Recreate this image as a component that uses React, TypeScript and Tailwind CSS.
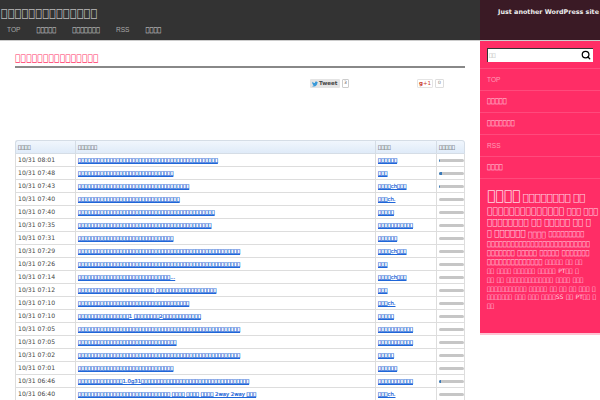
import { Search } from "lucide-react";
import { FaTwitter } from "react-icons/fa";

// the reference only shows missing-glyph boxes, so the copy is kept as boxes
const box = (n: number) => "\uE000".repeat(n);

const navItems = ["TOP", box(5), box(7), "RSS", box(4)];
const latinNav = ["TOP", "RSS"];

const rows: { time: string; title: string; source: string; bar?: number }[] = [
  { time: "10/31 08:01", title: box(44), source: box(6), bar: 1 },
  { time: "10/31 07:48", title: box(30), source: box(3), bar: 3 },
  { time: "10/31 07:43", title: box(35), source: `${box(4)}ch${box(3)}`, bar: 1 },
  { time: "10/31 07:40", title: box(32), source: `${box(3)}ch.` },
  { time: "10/31 07:40", title: box(43), source: box(5) },
  { time: "10/31 07:35", title: box(42), source: box(11) },
  { time: "10/31 07:31", title: box(30), source: box(6) },
  { time: "10/31 07:29", title: box(51), source: `${box(4)}ch${box(3)}` },
  { time: "10/31 07:26", title: box(51), source: box(3) },
  { time: "10/31 07:14", title: `${box(29)}...`, source: `${box(4)}ch${box(3)}` },
  { time: "10/31 07:12", title: `${box(24)} ${box(19)}`, source: box(3) },
  { time: "10/31 07:10", title: box(35), source: `${box(3)}ch.` },
  { time: "10/31 07:10", title: `${box(16)}1 ${box(8)}2${box(12)}`, source: box(5) },
  { time: "10/31 07:05", title: box(51), source: box(11) },
  { time: "10/31 07:05", title: box(31), source: box(11) },
  { time: "10/31 07:02", title: box(51), source: box(5) },
  { time: "10/31 07:01", title: box(30), source: box(6) },
  { time: "10/31 06:46", title: `${box(14)}1.0g31${box(34)}`, source: box(11), bar: 2 },
  { time: "10/31 06:40", title: `${box(29)} ${box(4)} ${box(4)} ${box(4)} 2way 2way ${box(3)}`, source: `${box(3)}ch.` },
];

// tag cloud, one entry per rendered line
const cloud: { height: string; words: [string, string][] }[] = [
  { height: "h-[16px]", words: [[box(4), "text-[13.9px]"], [box(8), "text-[10px]"], [box(2), "text-[10px]"]] },
  { height: "h-[12.5px]", words: [[box(14), "text-[9.2px]"], [box(3), "text-[8px]"], [box(3), "text-[8px]"]] },
  { height: "h-[11.5px]", words: [[box(8), "text-[8.7px]"], [box(2), "text-[8.7px]"], [box(5), "text-[8.7px]"], [box(2), "text-[8.7px]"], [box(1), "text-[8.7px]"]] },
  { height: "h-[11px]", words: [[box(1), "text-[8px]"], [box(6), "text-[8.7px]"], [box(4), "text-[7.5px]"], [box(9), "text-[6.6px]"]] },
  { height: "h-[9.5px]", words: [[box(26), "text-[6.6px]"]] },
  { height: "h-[9px]", words: [[box(7), "text-[6.6px]"], [box(5), "text-[6.6px]"], [box(5), "text-[6.6px]"], [box(7), "text-[6.6px]"]] },
  { height: "h-[8.8px]", words: [[box(14), "text-[6.6px]"], [box(5), "text-[6px]"], [box(2), "text-[6px]"], [box(2), "text-[6px]"]] },
  { height: "h-[8.8px]", words: [[box(2), "text-[6px]"], [box(4), "text-[6px]"], [box(6), "text-[6px]"], [box(5), "text-[6px]"], [`PT${box(2)}`, "text-[6px]"], [box(1), "text-[6px]"]] },
  { height: "h-[8.8px]", words: [[box(2), "text-[6px]"], [box(2), "text-[6px]"], [box(13), "text-[6px]"], [box(4), "text-[6px]"], [box(3), "text-[6px]"]] },
  { height: "h-[8.8px]", words: [[box(11), "text-[6px]"], [box(5), "text-[6px]"], [box(2), "text-[6px]"], [box(2), "text-[6px]"], [box(2), "text-[6px]"], [box(3), "text-[6px]"], [box(1), "text-[6px]"]] },
  { height: "h-[8.8px]", words: [[box(7), "text-[6px]"], [box(3), "text-[6px]"], [box(3), "text-[6px]"], [`${box(4)}SS`, "text-[6px]"], [box(2), "text-[6px]"], [`PT${box(2)}`, "text-[6px]"], [box(1), "text-[6px]"]] },
  { height: "h-[8.8px]", words: [[box(2), "text-[6px]"]] },
];

function App() {
  return (
    <div className="flex h-[400px] w-[600px] flex-col overflow-hidden bg-white font-['DejaVu_Sans',sans-serif]">
      <div className="flex h-10 shrink-0">
        <div className="flex-1 bg-[#333]">
          <div className="pl-px pt-[6px] text-[11.5px] leading-[14px] text-[#bbb]">{box(14)}</div>
          <nav className="mt-[6px] flex gap-[16px] pl-[7px] text-[6.6px] leading-[8px] text-[#ddd]">
            {navItems.map((item, i) => (
              <span key={i} className={latinNav.includes(item) ? "font-['Liberation_Sans',sans-serif] text-[#aaa]" : ""}>
                {item}
              </span>
            ))}
          </nav>
        </div>
        <div className="w-[120px] bg-[#3a1a25] pr-[1px] pt-2 text-right text-[6.4px] font-bold leading-[8px] text-[#eee]">
          Just another WordPress site
        </div>
      </div>

      <div className="flex flex-1 border-t border-[#ccc]">
        <main className="flex-1 pl-[15px] pr-[15px]">
          <h2 className="mt-[11px] border-b-2 border-[#888] pb-[2px] text-[9.3px] leading-[12px] text-[#ff3366]">{box(15)}</h2>
          <div className="relative h-[72px]">
            <div className="absolute left-[295px] top-[11px] flex items-center gap-[2px]">
              <span className="flex h-[9px] w-[30px] items-center gap-[1px] rounded-[1px] bg-[#e4e4e4] pl-[2px] text-[5.5px] font-bold text-[#444]">
                <FaTwitter className="h-[6px] w-[6px] text-[#3a9ad9]" />
                Tweet
              </span>
              <span className="flex h-[9px] w-[7px] items-center justify-center rounded-[1px] border border-[#ccc] text-[4.5px] text-[#555]">3</span>
            </div>
            <div className="absolute left-[402px] top-[11px] flex items-center gap-[2px]">
              <span className="flex h-[9px] w-[16px] items-center justify-center rounded-[1px] border border-[#e4e4e4] text-[5.5px] text-[#c9402c]">
                <b>g</b>+1
              </span>
              <span className="flex h-[9px] w-[9px] items-center justify-center rounded-[1px] border border-[#ddd] text-[4.5px] text-[#777]">0</span>
            </div>
          </div>
          <table className="w-[450px] table-fixed border-separate border-spacing-0 text-[6.1px] leading-[12px]">
            <thead>
              <tr className="bg-gradient-to-b from-[#f2f7fd] to-[#deeaf8] text-left text-[#333]">
                <th className="h-[13px] w-[60px] rounded-tl-[3px] border-y border-l border-[#d5dde6] pl-[2px] text-[5.3px] font-normal">{box(4)}</th>
                <th className="border-y border-l border-[#d5dde6] pl-[2px] text-[5.3px] font-normal">{box(6)}</th>
                <th className="w-[61px] border-y border-l border-[#d5dde6] pl-[2px] text-[5.3px] font-normal">{box(4)}</th>
                <th className="w-[29px] rounded-tr-[3px] border-y border-x border-[#d5dde6] pl-[2px] text-[5.3px] font-normal">{box(5)}</th>
              </tr>
            </thead>
            <tbody>
              {rows.map((row, i) => (
                <tr key={i}>
                  <td className="h-[13px] border-b border-l border-[#ddd] pl-[2px] text-[#444]">{row.time}</td>
                  <td className="overflow-hidden whitespace-nowrap border-b border-l border-[#ddd] pl-[2px]">
                    <a className="text-[5.3px] text-[#1f66d8] underline decoration-[#1f66d8] [-webkit-text-stroke:0.2px_#1f66d8]">{row.title}</a>
                  </td>
                  <td className="whitespace-nowrap border-b border-l border-[#ddd] pl-[2px]">
                    <a className="text-[5.3px] text-[#1f66d8] underline decoration-[#1f66d8] [-webkit-text-stroke:0.2px_#1f66d8]">{row.source}</a>
                  </td>
                  <td className="border-x border-b border-[#ddd] pl-[2px]">
                    <div className="h-[3px] w-[25px] overflow-hidden rounded-full bg-[#c6c6c6]">
                      {row.bar && <div className="h-full bg-[#3a7ab8]" style={{ width: row.bar }} />}
                    </div>
                  </td>
                </tr>
              ))}
            </tbody>
          </table>
        </main>

        <aside className="h-[294px] w-[120px] border-b-2 border-[#ffc2d2] bg-[#ff2d66] text-[#ffd5e0]">
          <div className="flex h-[28px] items-center border-b border-[#ff4a7c] px-[7px]">
            <div className="flex h-[14px] w-[109px] items-center justify-between border-l border-t border-[#333] bg-white pl-[1px] pr-[2px]">
              <span className="text-[5.5px] text-[#aaa]">{box(2)}</span>
              <Search className="h-[10px] w-[10px] text-black" strokeWidth={3} />
            </div>
          </div>
          {navItems.map((item, i) => (
            <div
              key={i}
              className={`flex h-[22px] items-center border-b border-[#ff4a7c] pl-[7px] text-[6.6px] ${
                latinNav.includes(item) ? "font-['Liberation_Sans',sans-serif] text-[#ff9db8]" : ""
              }`}
            >
              {item}
            </div>
          ))}
          <div className="px-[7px] pt-[8px]">
            {cloud.map((line, i) => (
              <div key={i} className={`flex items-end gap-[2.5px] whitespace-nowrap leading-none ${line.height}`}>
                {line.words.map(([word, size], j) => (
                  <span key={j} className={size}>
                    {word}
                  </span>
                ))}
              </div>
            ))}
          </div>
        </aside>
      </div>
    </div>
  );
}

export default App;
